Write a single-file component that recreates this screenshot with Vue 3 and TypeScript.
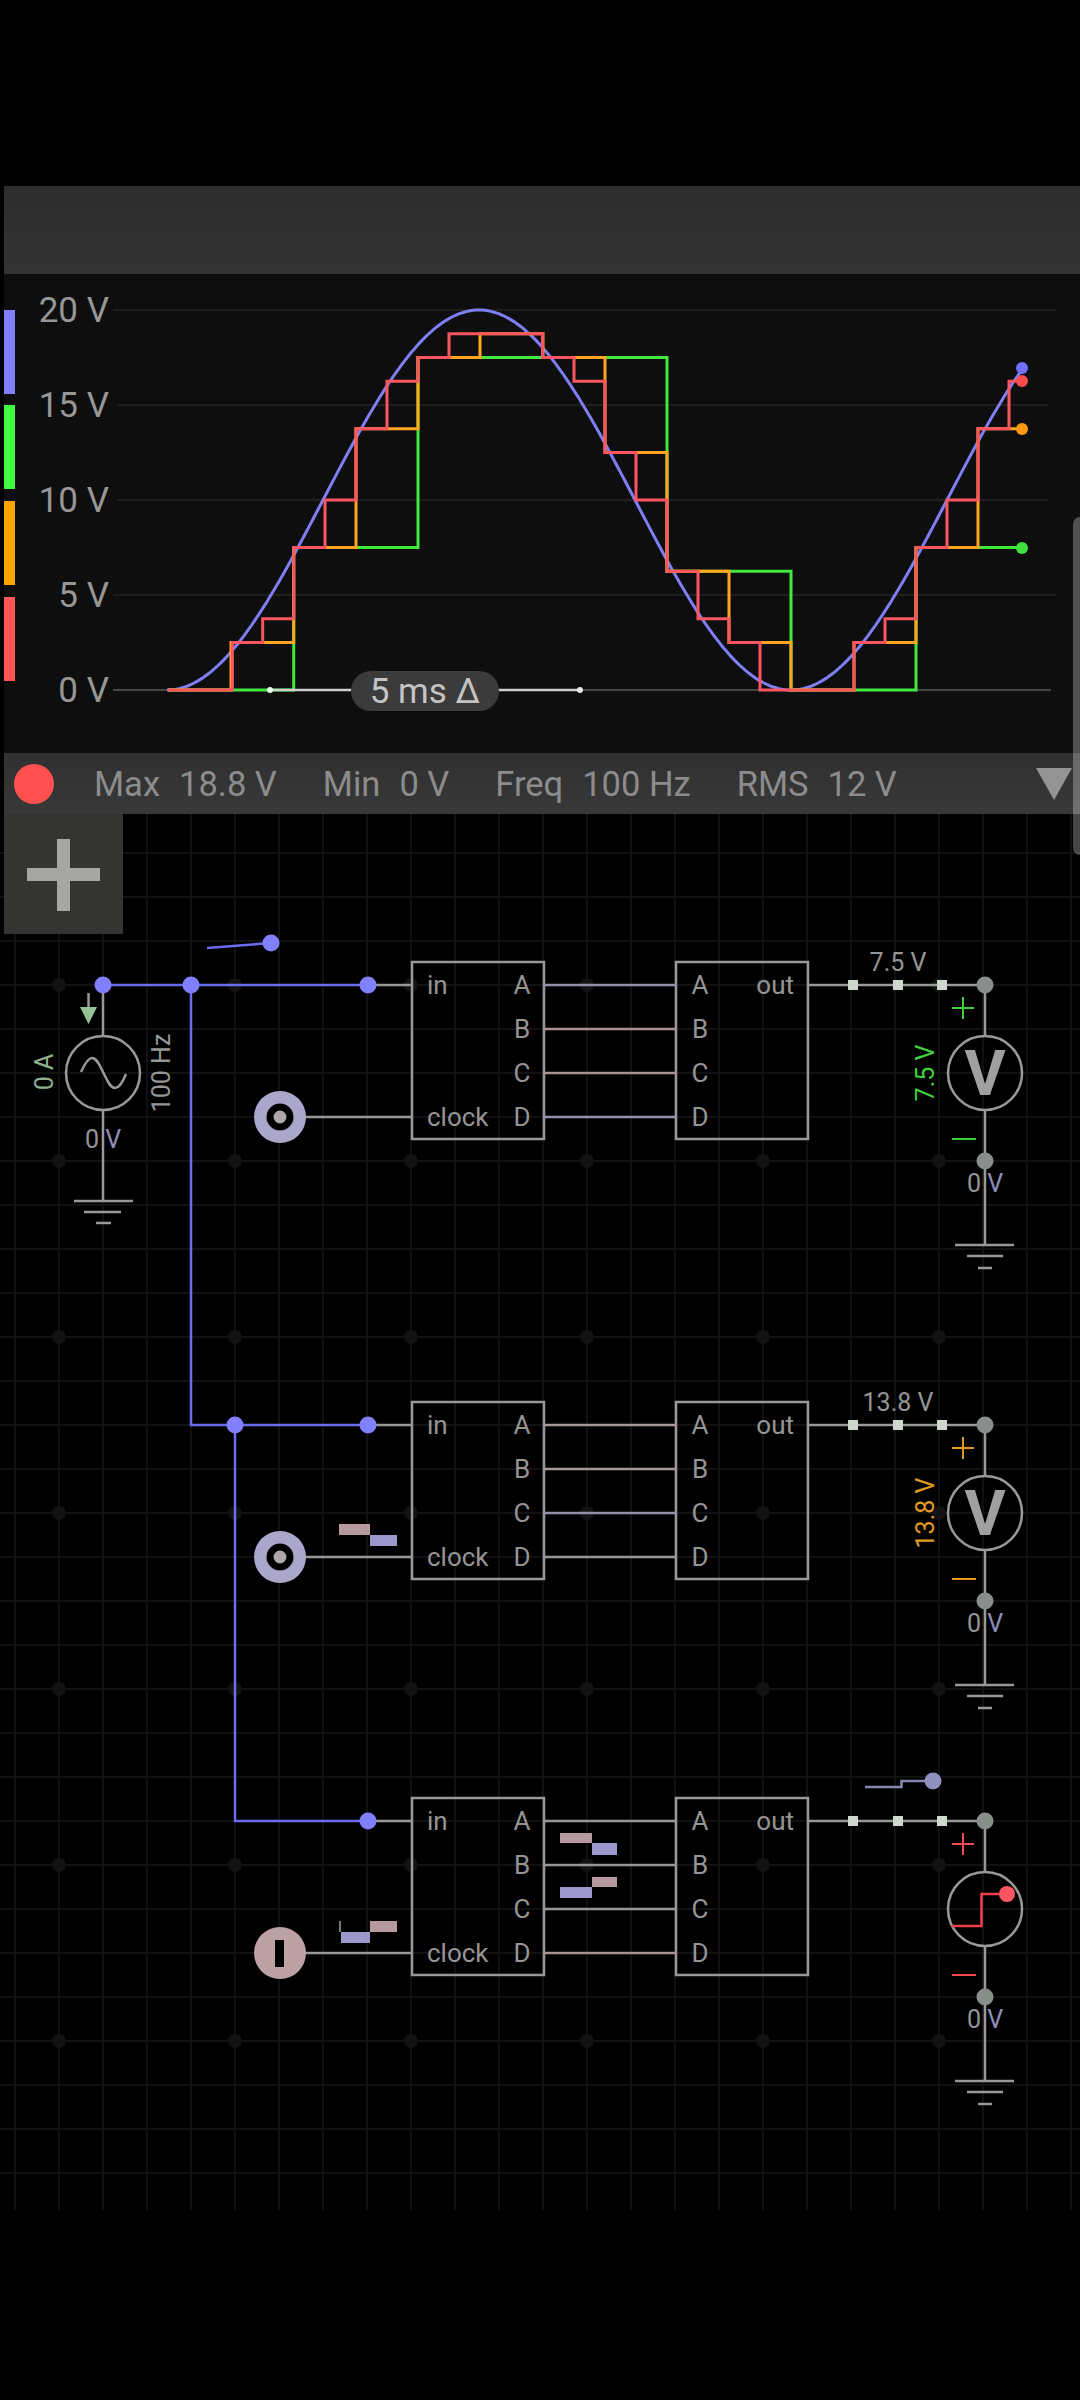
<script setup lang="ts">
type Pt = [number, number]
const END = 1022
const vy = (v: number) => 690 - v * 19

function stepPath(pts: Pt[]): string {
  let d = `M${pts[0][0]} ${vy(pts[0][1])}`
  for (let i = 1; i < pts.length; i++) {
    d += ` H${pts[i][0]} V${vy(pts[i][1])}`
  }
  return d + ` H${END}`
}

const sinePts: string[] = []
for (let x = 167; x <= END; x += 3) {
  const v = 10 - 10 * Math.cos((2 * Math.PI * (x - 167)) / 624)
  sinePts.push(`${x} ${vy(v).toFixed(1)}`)
}
const sinePath = 'M' + sinePts.join(' L')

const green = stepPath([[168, 0], [293.7, 7.5], [418, 17.5], [667, 6.25], [791, 0], [916, 7.5]])
const orange = stepPath([
  [168, 0], [231, 2.5], [293.7, 7.5], [356, 13.75], [418, 17.5], [480, 18.75], [543, 17.5],
  [605, 12.5], [667, 6.25], [729, 2.5], [791, 0], [854, 2.5], [916, 7.5], [978, 13.75],
])
const red = stepPath([
  [168, 0], [232.4, 2.5], [262.7, 3.75], [293.7, 7.5], [325, 10], [356, 13.75], [387, 16.25],
  [418, 17.5], [449, 18.75], [542.5, 17.5], [574, 16.25], [605, 12.5], [636, 10], [667, 6.25],
  [698, 3.75], [729, 2.5], [760, 0], [854, 2.5], [885, 3.75], [916, 7.5], [947, 10], [978, 13.75],
  [1009, 16.25],
])

const axis = [
  { label: '20 V', y: 310, from: 113, to: 1056, color: '#1f1f1f' },
  { label: '15 V', y: 405, from: 117, to: 1048, color: '#1f1f1f' },
  { label: '10 V', y: 500, from: 117, to: 1048, color: '#1f1f1f' },
  { label: '5 V', y: 595, from: 113, to: 1056, color: '#1f1f1f' },
  { label: '0 V', y: 690, from: 113, to: 1051, color: '#454545' },
]
const legend = [
  { y: 310, c: '#8080ff' },
  { y: 405, c: '#40ff40' },
  { y: 501, c: '#ffa500' },
  { y: 597, c: '#ff5555' },
]
const ends = [
  { y: 368, c: '#7070ff' },
  { y: 548, c: '#40e040' },
  { y: 429, c: '#ff9a10' },
  { y: 381, c: '#ff4d4d' },
]

const stats = [
  { k: 'Max', v: '18.8 V' },
  { k: 'Min', v: '0 V' },
  { k: 'Freq', v: '100 Hz' },
  { k: 'RMS', v: '12 V' },
]

const gridX: number[] = []
for (let x = 15; x < 1080; x += 44) gridX.push(x)
const gridY: number[] = []
for (let y = 853; y < 2205; y += 44) gridY.push(y)
const majorDots: Pt[] = []
for (let x = 59; x < 1080; x += 176) for (let y = 985; y < 2200; y += 176) majorDots.push([x, y])

const PINK = '#b79a9f'
const LILAC = '#9c98cc'
const GRAY = '#979797'

const stages = [
  {
    y: 985,
    led: 'ring',
    ledFill: '#aaa6cc',
    links: ['#9292ac', '#a89292', '#a89292', '#9292ac'],
    top: '7.5 V',
    side: '7.5 V',
    accent: '#3fd03f',
    meter: 'V',
  },
  {
    y: 1425,
    led: 'ring',
    ledFill: '#aaa6cc',
    links: ['#a89898', '#a89898', '#9292ac', GRAY],
    top: '13.8 V',
    side: '13.8 V',
    accent: '#e09a20',
    meter: 'V',
  },
  {
    y: 1821,
    led: 'bar',
    ledFill: '#bca2a5',
    links: [GRAY, GRAY, GRAY, '#a89292'],
    top: '',
    side: '',
    accent: '#f04a50',
    meter: 'scope',
  },
]
const letters = ['A', 'B', 'C', 'D']

const pulses = [
  { x: 339, y: 1524, w: 31, h: 11, c: PINK },
  { x: 370, y: 1535, w: 27, h: 11, c: LILAC },
  { x: 560, y: 1833, w: 32, h: 10, c: PINK },
  { x: 592, y: 1843, w: 25, h: 12, c: LILAC },
  { x: 592, y: 1877, w: 25, h: 10, c: PINK },
  { x: 560, y: 1887, w: 32, h: 11, c: LILAC },
  { x: 370, y: 1921, w: 27, h: 11, c: PINK },
  { x: 341, y: 1932, w: 29, h: 11, c: LILAC },
  { x: 339, y: 1921, w: 2, h: 11, c: '#777' },
]
const purpleNodes: Pt[] = [
  [103, 985], [191, 985], [368, 985], [235, 1425], [368, 1425], [368, 1821], [271, 943],
]
</script>

<template>
  <div class="page">
    <section class="scope">
      <div class="scope-head"></div>
      <svg class="plot" width="1076" height="479" viewBox="4 274 1076 479">
        <rect v-for="b in legend" :key="b.y" x="4" :y="b.y" width="11" height="84" :fill="b.c" />
        <g v-for="a in axis" :key="a.label">
          <line :x1="a.from" :x2="a.to" :y1="a.y" :y2="a.y" :stroke="a.color" stroke-width="2" />
          <text class="axis-label" x="109" :y="a.y + 12" text-anchor="end">{{ a.label }}</text>
        </g>
        <path :d="sinePath" class="trace" stroke="#7f7ff4" />
        <path :d="green" class="trace" stroke="#40e840" />
        <path :d="orange" class="trace" stroke="#ffa520" />
        <path :d="red" class="trace" stroke="#fb5560" />
        <circle v-for="e in ends" :key="e.c" cx="1022" :cy="e.y" r="6" :fill="e.c" />
        <line x1="270" x2="580" y1="690" y2="690" stroke="#cfcfcf" stroke-width="2.5" />
        <circle cx="270" cy="690" r="3" fill="#e4ffe4" />
        <circle cx="580" cy="690" r="3" fill="#e8e8e8" />
        <rect x="351" y="671" width="148" height="40" rx="20" fill="#3b3b3b" />
        <text class="pill-text" x="425" y="703" text-anchor="middle">5 ms Δ</text>
      </svg>
      <div class="scope-foot">
        <span class="rec"></span>
        <div class="stats">
          <span v-for="s in stats" :key="s.k" class="stat">
            <span>{{ s.k }}</span><span>{{ s.v }}</span>
          </span>
        </div>
        <span class="menu-arrow"></span>
      </div>
    </section>

    <section class="bench">
      <svg class="board" width="1080" height="1396" viewBox="0 814 1080 1396">
        <g class="grid">
          <line v-for="x in gridX" :key="'x' + x" :x1="x" :x2="x" y1="814" y2="2210" />
          <line v-for="y in gridY" :key="'y' + y" x1="0" x2="1080" :y1="y" :y2="y" />
        </g>
        <circle v-for="d in majorDots" :key="d[0] + '-' + d[1]" :cx="d[0]" :cy="d[1]" r="7" fill="#131313" />

        <path class="wire-live" d="M103 985 H368 M191 985 V1425 H368 M235 1425 V1821 H368 M207 948 L271 943" />

        <!-- AC source -->
        <g class="wire">
          <path d="M103 985 V1036 M103 1110 V1201 M74 1201 H133 M84 1212 H121 M96 1223 H111 M88.5 993 V1008" />
          <circle cx="103" cy="1073" r="37" />
          <path d="M81 1072 C86 1061 89 1058 92 1058 C97 1058 100 1066 103.5 1073 C107 1080 110 1088 115 1088 C118 1088 122 1084 126 1074" />
        </g>
        <polygon points="80,1007 97,1007 88.5,1024" fill="#93c493" />
        <text class="small tint-green" text-anchor="middle" transform="translate(53 1072) rotate(-90)">0 A</text>
        <text class="small" text-anchor="middle" transform="translate(170 1073) rotate(-90)">100 Hz</text>
        <text class="small" x="103" y="1148" text-anchor="middle">0 <tspan class="tint-lilac">V</tspan></text>

        <g v-for="s in stages" :key="s.y" :transform="`translate(0 ${s.y})`">
          <g class="wire">
            <path d="M368 0 H412 M305 132 H412 M808 0 H985 V51 M985 125 V260 M955 260 H1014 M967 271 H1003 M978 283 H992" />
            <rect x="412" y="-23" width="132" height="177" />
            <rect x="676" y="-23" width="132" height="177" />
            <circle cx="985" cy="88" r="37" />
          </g>
          <line
            v-for="(c, i) in s.links"
            :key="i"
            x1="544"
            x2="676"
            :y1="i * 44"
            :y2="i * 44"
            :stroke="c"
            stroke-width="2.5"
          />
          <text class="pin" x="427" y="9">in</text>
          <text class="pin" x="427" y="141">clock</text>
          <text v-for="(l, i) in letters" :key="'l' + l" class="pin" x="522" :y="i * 44 + 9" text-anchor="middle">{{ l }}</text>
          <text v-for="(l, i) in letters" :key="'r' + l" class="pin" x="700" :y="i * 44 + 9" text-anchor="middle">{{ l }}</text>
          <text class="pin" x="794" y="9" text-anchor="end">out</text>

          <rect v-for="x in [848, 893, 937]" :key="x" :x="x" y="-5" width="10" height="10" fill="#cfd7cf" />
          <circle cx="985" cy="0" r="8.5" fill="#888e8a" />
          <circle cx="985" cy="176" r="8.5" fill="#888e8a" />
          <text class="small" x="985" y="207" text-anchor="middle">0 <tspan class="tint-lilac">V</tspan></text>

          <path :stroke="s.accent" stroke-width="2" fill="none" d="M952 23 H974 M963 12 V34 M952 154 H976" />

          <template v-if="s.meter === 'V'">
            <text class="meter-v" x="985" y="110" text-anchor="middle">V</text>
            <text class="small" x="898" y="-14" text-anchor="middle">{{ s.top }}</text>
            <text class="small" :style="{ fill: s.accent }" text-anchor="middle" transform="translate(934 88) rotate(-90)">{{ s.side }}</text>
          </template>
          <template v-else>
            <path d="M951.5 105 H981.5 V73 H1007" fill="none" stroke="#f0404e" stroke-width="2.5" />
            <circle cx="1007" cy="73" r="8" fill="#ff5560" />
          </template>

          <circle cx="280" cy="132" r="26" :fill="s.ledFill" />
          <template v-if="s.led === 'ring'">
            <circle cx="280" cy="132" r="10" fill="#b0a8a8" stroke="#000" stroke-width="7" />
          </template>
          <rect v-else x="275" y="119" width="9" height="27" fill="#000" />
        </g>

        <circle v-for="n in purpleNodes" :key="n[0] + '/' + n[1]" :cx="n[0]" :cy="n[1]" r="8.5" fill="#8080ff" />

        <rect v-for="p in pulses" :key="p.x + '_' + p.y" :x="p.x" :y="p.y" :width="p.w" :height="p.h" :fill="p.c" />

        <path d="M865 1787 H901.5 V1781 H933" fill="none" stroke="#8686b0" stroke-width="2.5" />
        <circle cx="933" cy="1781" r="8.5" fill="#9090c0" />
      </svg>
      <button class="add" type="button" aria-label="Add">
        <span class="plus-h"></span>
        <span class="plus-v"></span>
      </button>
    </section>

    <div class="edge-handle"></div>
  </div>
</template>

<style scoped>
.page {
  position: relative;
  width: 1080px;
  height: 2400px;
  box-sizing: border-box;
  padding-top: 186px;
  background: #000;
  overflow: hidden;
  font-family: Roboto, "Liberation Sans", sans-serif;
}
.scope {
  display: flex;
  flex-direction: column;
  margin-left: 4px;
}
.scope-head {
  height: 88px;
  background: linear-gradient(#2d2d2d, #333333);
}
.plot {
  display: block;
  background: #0e0e0e;
}
.axis-label {
  font-size: 35px;
  fill: #979797;
}
.trace {
  fill: none;
  stroke-width: 3;
}
.pill-text {
  font-size: 35px;
  fill: #c4c4c4;
}
.scope-foot {
  display: flex;
  align-items: center;
  height: 61px;
  padding: 0 8px 0 10px;
  background: linear-gradient(#303030, #383838);
}
.rec {
  width: 40px;
  height: 40px;
  border-radius: 50%;
  background: #ff5050;
  flex: none;
}
.stats {
  display: flex;
  gap: 46px;
  margin-left: 40px;
  font-size: 34.5px;
  color: #8c8c8c;
}
.stat {
  display: flex;
  gap: 19px;
  white-space: nowrap;
}
.menu-arrow {
  margin-left: auto;
  width: 0;
  height: 0;
  border-left: 18px solid transparent;
  border-right: 18px solid transparent;
  border-top: 32px solid #949494;
}
.bench {
  position: relative;
}
.board {
  display: block;
}
.grid line {
  stroke: #111111;
  stroke-width: 2;
}
.wire-live {
  fill: none;
  stroke: #6c6cf0;
  stroke-width: 2.5;
}
.wire path,
.wire rect,
.wire circle {
  fill: none;
  stroke: #999999;
  stroke-width: 2.5;
}
.pin {
  font-size: 26px;
  fill: #959595;
}
.small {
  font-size: 25px;
  fill: #959595;
}
.tint-green {
  fill: #90ae90;
}
.tint-lilac {
  fill: #8e8eb8;
}
.meter-v {
  font-size: 63px;
  font-weight: 700;
  fill: #a0a0a0;
}
.add {
  position: absolute;
  left: 4px;
  top: 0;
  width: 119px;
  height: 120px;
  padding: 0;
  border: 0;
  background: #343432;
}
.plus-h {
  position: absolute;
  left: 23px;
  top: 54px;
  width: 73px;
  height: 13px;
  background: #a6a6a2;
}
.plus-v {
  position: absolute;
  left: 53px;
  top: 25px;
  width: 13px;
  height: 72px;
  background: #a6a6a2;
}
.edge-handle {
  position: absolute;
  right: 0;
  top: 517px;
  width: 7px;
  height: 338px;
  border-radius: 10px 0 0 10px;
  background: rgba(255, 255, 255, 0.28);
}
</style>

<style>
html,
body {
  margin: 0;
  background: #000;
}
</style>
